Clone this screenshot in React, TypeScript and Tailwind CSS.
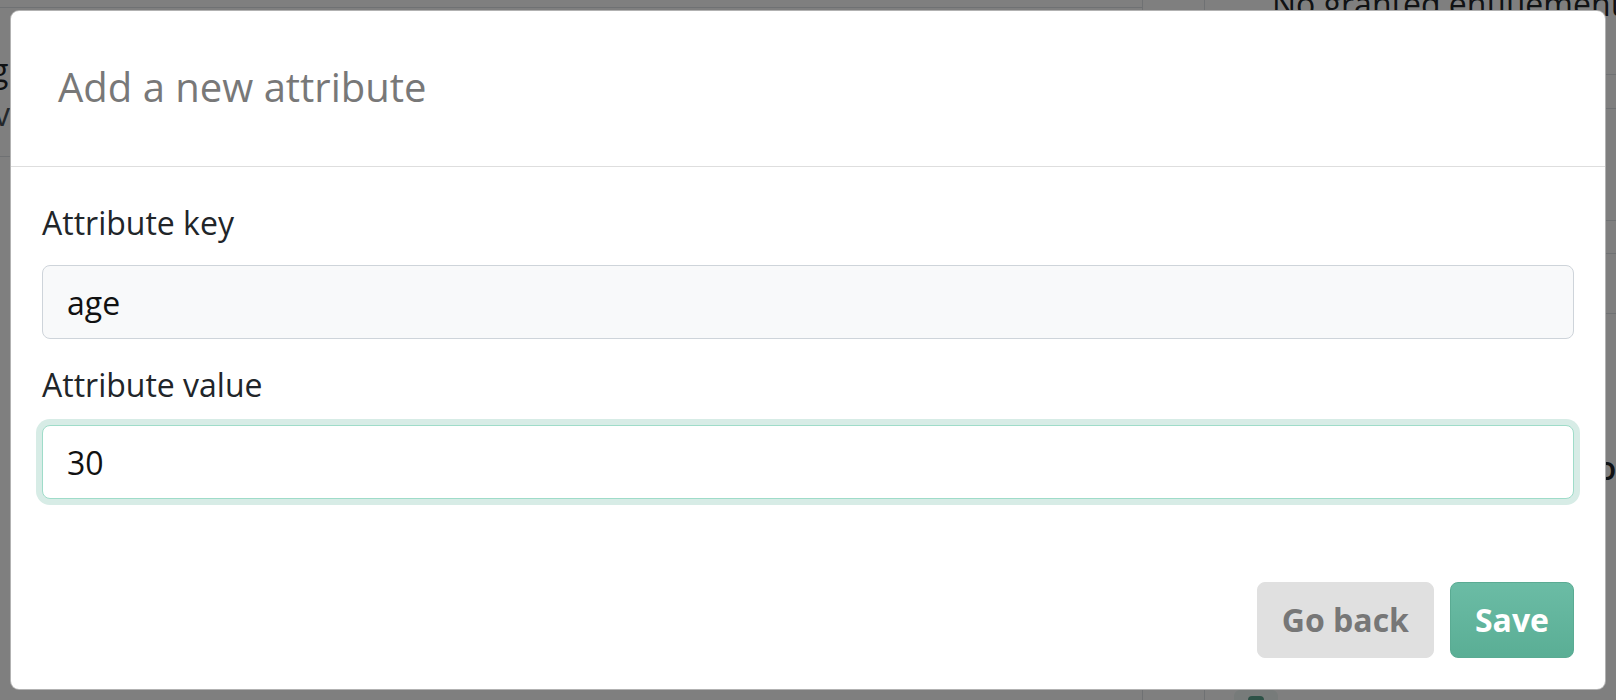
import React from 'react';

// Background page (dimmed by the overlay), mostly hidden behind the modal
const PageBehind = () => {
  return (
    <div className="flex h-full w-full bg-white text-[#212529]">
      <div className="flex w-[1143px] shrink-0 flex-col border-r border-[#dee2e6]">
        <div className="h-[8px] border-b border-[#dee2e6]" />
        <div className="flex flex-col pt-[40px] text-[32px] leading-[44px]">
          <span className="-ml-[9px]">g</span>
          <span className="-ml-[6px] text-[#495057]">v</span>
        </div>
        <div className="mt-[20px] border-b border-[#dee2e6]" />
      </div>
      <div className="w-[62px] shrink-0 border-r border-[#dee2e6]" />
      <div className="flex min-w-0 flex-1 flex-col overflow-hidden">
        <div className="h-[75px] shrink-0 border-b border-[#dee2e6] pl-[67px]">
          <span className="-mt-[18px] block whitespace-nowrap text-[32px] leading-[44px]">No granted entitlements</span>
        </div>
        <div className="h-[34px] shrink-0 border-b border-[#dee2e6]" />
        <div className="h-[112px] shrink-0 border-b border-[#dee2e6]" />
        <div className="h-[33px] shrink-0 border-b border-[#dee2e6]" />
        <div className="h-[60px] shrink-0 border-b border-[#dee2e6]" />
        <div className="flex justify-end pt-[132px] text-[32px] font-semibold leading-[44px]">
          <span className="-mr-[14px]">or</span>
        </div>
        <div className="mt-auto flex pl-[29px]">
          <div className="flex h-[10px] w-[44px] justify-center rounded-t-[6px] bg-[#eef7f4] pt-[6px]">
            <div className="h-[4px] w-[16px] rounded-t-[4px] bg-[#5aa58e]" />
          </div>
        </div>
      </div>
    </div>
  );
};

const AttributeModal = () => {
  return (
    <div className="m-[10px] flex h-[680px] flex-col rounded-[9px] border border-black/30 bg-white">
      <div className="flex h-[156px] items-center border-b border-[#dedede] px-[47px] pb-[4px]">
        <h5 className="text-[40px] font-normal leading-normal text-[#787878]">Add a new attribute</h5>
      </div>

      <div className="flex flex-col px-[31px] pt-[32px]">
        <label className="mb-[18px] text-[32px] leading-[48px] text-[#212529]">Attribute key</label>
        <input
          readOnly
          value="age"
          className="mb-[22px] h-[74px] w-full rounded-[8px] border border-[#ced4da] bg-[#f8f9fa] px-[24px] text-[32px] text-[#111] outline-none"
        />
        <label className="mb-[16px] text-[32px] leading-[48px] text-[#212529]">Attribute value</label>
        <input
          readOnly
          value="30"
          className="h-[74px] w-full rounded-[8px] border border-[#9fdcc9] bg-white px-[24px] text-[32px] text-[#111] outline-none ring-[6px] ring-[#d7ece6]"
        />
      </div>

      <div className="mt-auto flex justify-end gap-[16px] px-[31px] pb-[31px]">
        <button className="h-[76px] rounded-[8px] border border-[#e0e0e0] bg-[#e0e0e0] px-[24px] text-[32px] font-bold text-[#777777]">
          Go back
        </button>
        <button className="h-[76px] rounded-[8px] border border-[#5aab93] bg-gradient-to-b from-[#6bbca5] to-[#5aae95] px-[24px] text-[32px] font-bold text-white">
          Save
        </button>
      </div>
    </div>
  );
};

export default function App() {
  return (
    <div className="relative h-[700px] w-[1616px] overflow-hidden font-['Open_Sans',sans-serif]">
      <PageBehind />
      {/* modal backdrop */}
      <div className="absolute inset-0 bg-black/50">
        <AttributeModal />
      </div>
    </div>
  );
}
